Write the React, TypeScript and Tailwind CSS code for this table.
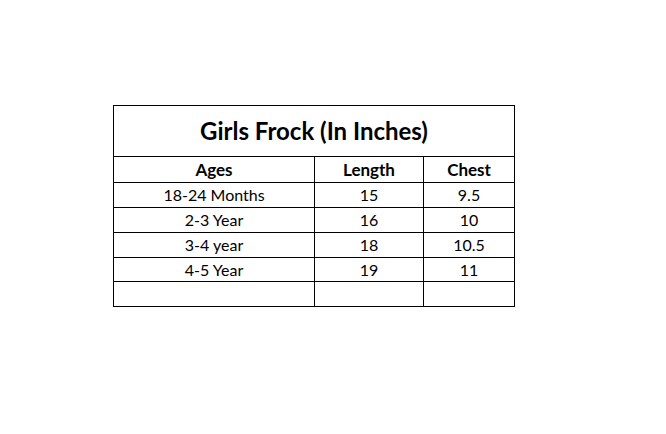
const rows = [
  { age: "18-24 Months", length: "15", chest: "9.5" },
  { age: "2-3 Year", length: "16", chest: "10" },
  { age: "3-4 year", length: "18", chest: "10.5" },
  { age: "4-5 Year", length: "19", chest: "11" },
  { age: "", length: "", chest: "" },
];

export default function App() {
  return (
    <div className="w-[666px] h-[434px] bg-white pt-[105px] pl-[113px] font-['Lato',sans-serif] text-black">
      <table className="border-collapse table-fixed w-[401px]">
        <colgroup>
          <col className="w-[201px]" />
          <col className="w-[109px]" />
          <col className="w-[91px]" />
        </colgroup>
        <tbody>
          {/* title */}
          <tr className="h-[51px]">
            <td colSpan={3} className="border border-black text-center text-[24px] font-bold p-0 leading-none">
              Girls Frock (In Inches)
            </td>
          </tr>
          <tr className="h-[26px]">
            <td className="border border-black text-center text-[17px] font-bold p-0 leading-none">Ages</td>
            <td className="border border-black text-center text-[17px] font-bold p-0 leading-none">Length</td>
            <td className="border border-black text-center text-[17px] font-bold p-0 leading-none">Chest</td>
          </tr>
          {rows.map((r, i) => (
            <tr key={i} className={i === 3 ? "h-[24px]" : "h-[25px]"}>
              <td className="border border-black text-center text-[16px] p-0 leading-none">{r.age}</td>
              <td className="border border-black text-center text-[16px] p-0 leading-none">{r.length}</td>
              <td className="border border-black text-center text-[16px] p-0 leading-none">{r.chest}</td>
            </tr>
          ))}
        </tbody>
      </table>
    </div>
  );
}
